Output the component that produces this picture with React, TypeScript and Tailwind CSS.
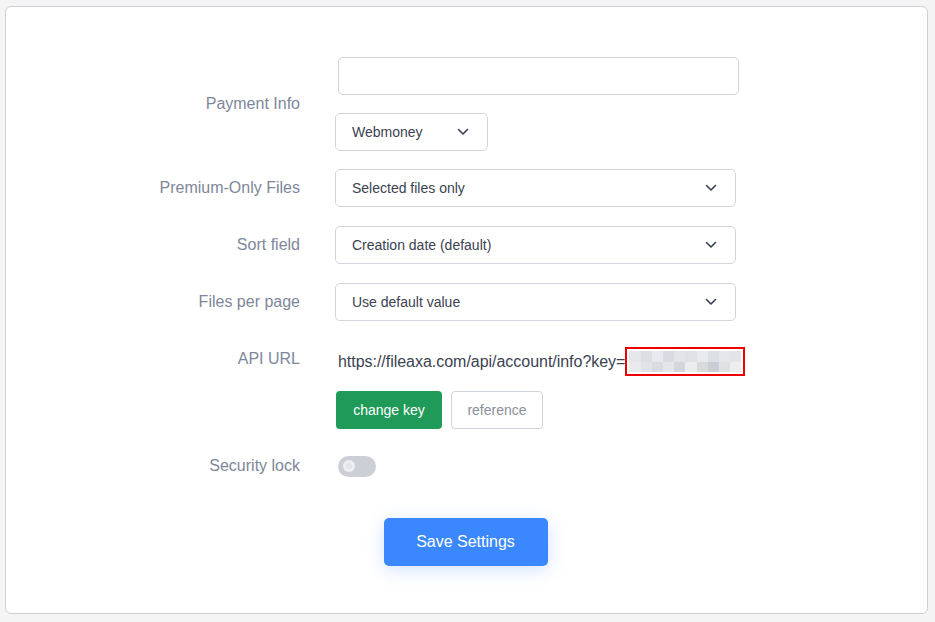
import { ReactNode } from 'react';

function Chevron() {
  return (
    <svg width="12" height="8" viewBox="0 0 12 8" fill="none" className="shrink-0">
      <path d="M1.5 1.5 6 6l4.5-4.5" stroke="#374151" strokeWidth="1.6" strokeLinecap="round" strokeLinejoin="round" />
    </svg>
  );
}

function Select({ value, width }: { value: string; width: string }) {
  return (
    <div className={`${width} h-[38px] flex items-center justify-between border border-[#d1d5db] rounded-[5px] bg-white pl-[16px] pr-[18px] text-[14px] text-[#3b4252]`}>
      <span>{value}</span>
      <Chevron />
    </div>
  );
}

function Row({ label, children, align = 'center', className = '' }: { label: string; children: ReactNode; align?: 'center' | 'start'; className?: string }) {
  return (
    <div className={`flex ${align === 'center' ? 'items-center' : 'items-start'} ${className}`}>
      <div className="w-[294px] shrink-0 text-right text-[16px] leading-[24px] text-[#7e879a]">{label}</div>
      <div className="ml-[35px] flex-1">{children}</div>
    </div>
  );
}

// blurred key pixels
const blur = [
  '#e4e6ea', '#dcdee3', '#e8e9ec', '#d8dbe1', '#e2e4e8', '#dfe1e5', '#e9eaed', '#dcdfe4', '#e6e7ea', '#e3e4e7',
  '#e9eaec', '#e1e3e6', '#d9dbdf', '#e5e6e9', '#d4d6db', '#eceded', '#d9dadc', '#c9ced6', '#e0e1e4', '#eeeeef',
];

export default function App() {
  return (
    <div className="h-[622px] w-[935px] bg-[#f4f4f5] pt-[6px] pl-[5px] font-['Liberation_Sans',Arial,sans-serif]">
      <div className="w-[923px] h-[608px] bg-white border border-[#ccd1d8] rounded-[6px] pt-[50px]">
        <Row label="Payment Info">
          <div className="flex flex-col">
            <div className="ml-[3px] w-[401px] h-[38px] border border-[#cfd3da] rounded-[5px] bg-white" />
            <div className="mt-[18px]">
              <Select value="Webmoney" width="w-[153px]" />
            </div>
          </div>
        </Row>

        <Row label="Premium-Only Files" className="mt-[18px]">
          <Select value="Selected files only" width="w-[401px]" />
        </Row>
        <Row label="Sort field" className="mt-[19px]">
          <Select value="Creation date (default)" width="w-[401px]" />
        </Row>
        <Row label="Files per page" className="mt-[19px]">
          <Select value="Use default value" width="w-[401px]" />
        </Row>

        <Row label="API URL" align="start" className="mt-[26px]">
          <div className="h-[29px] flex items-center pl-[3px] text-[16px] text-[#3b4252]">
            <span className="tracking-[-0.03px]">https://fileaxa.com/api/account/info?key=</span>
            <span className="w-[120px] h-[29px] border-2 border-[#ee0000] grid grid-cols-10 grid-rows-2 p-[2px]">
              {blur.map((c, i) => (
                <span key={i} style={{ background: c }} />
              ))}
            </span>
          </div>
          <div className="mt-[15px] flex gap-[9px] pl-[1px]">
            <button className="w-[106px] h-[38px] rounded-[4px] bg-[#1f9a58] text-white text-[14px]">change key</button>
            <button className="w-[92px] h-[38px] rounded-[4px] border border-[#cfd3da] bg-white text-[#8a909c] text-[14px]">reference</button>
          </div>
        </Row>

        <Row label="Security lock" className="mt-[22px] h-[30px]">
          <div className="ml-[3px] w-[38px] h-[21px] rounded-full bg-[#ccd0d6] flex items-center pl-[5px]">
            <span className="w-[12px] h-[12px] rounded-full bg-[#eeeff1] flex items-center justify-center">
              <span className="w-[6px] h-[6px] rounded-full bg-[#e2e4e8]" />
            </span>
          </div>
        </Row>

        <div className="mt-[37px] flex justify-center pr-[2px]">
          <button className="w-[164px] h-[48px] rounded-[5px] bg-[#3a87fe] text-white text-[16px] shadow-[0_4px_18px_rgba(59,130,246,0.22)]">
            Save Settings
          </button>
        </div>
      </div>
    </div>
  );
}
